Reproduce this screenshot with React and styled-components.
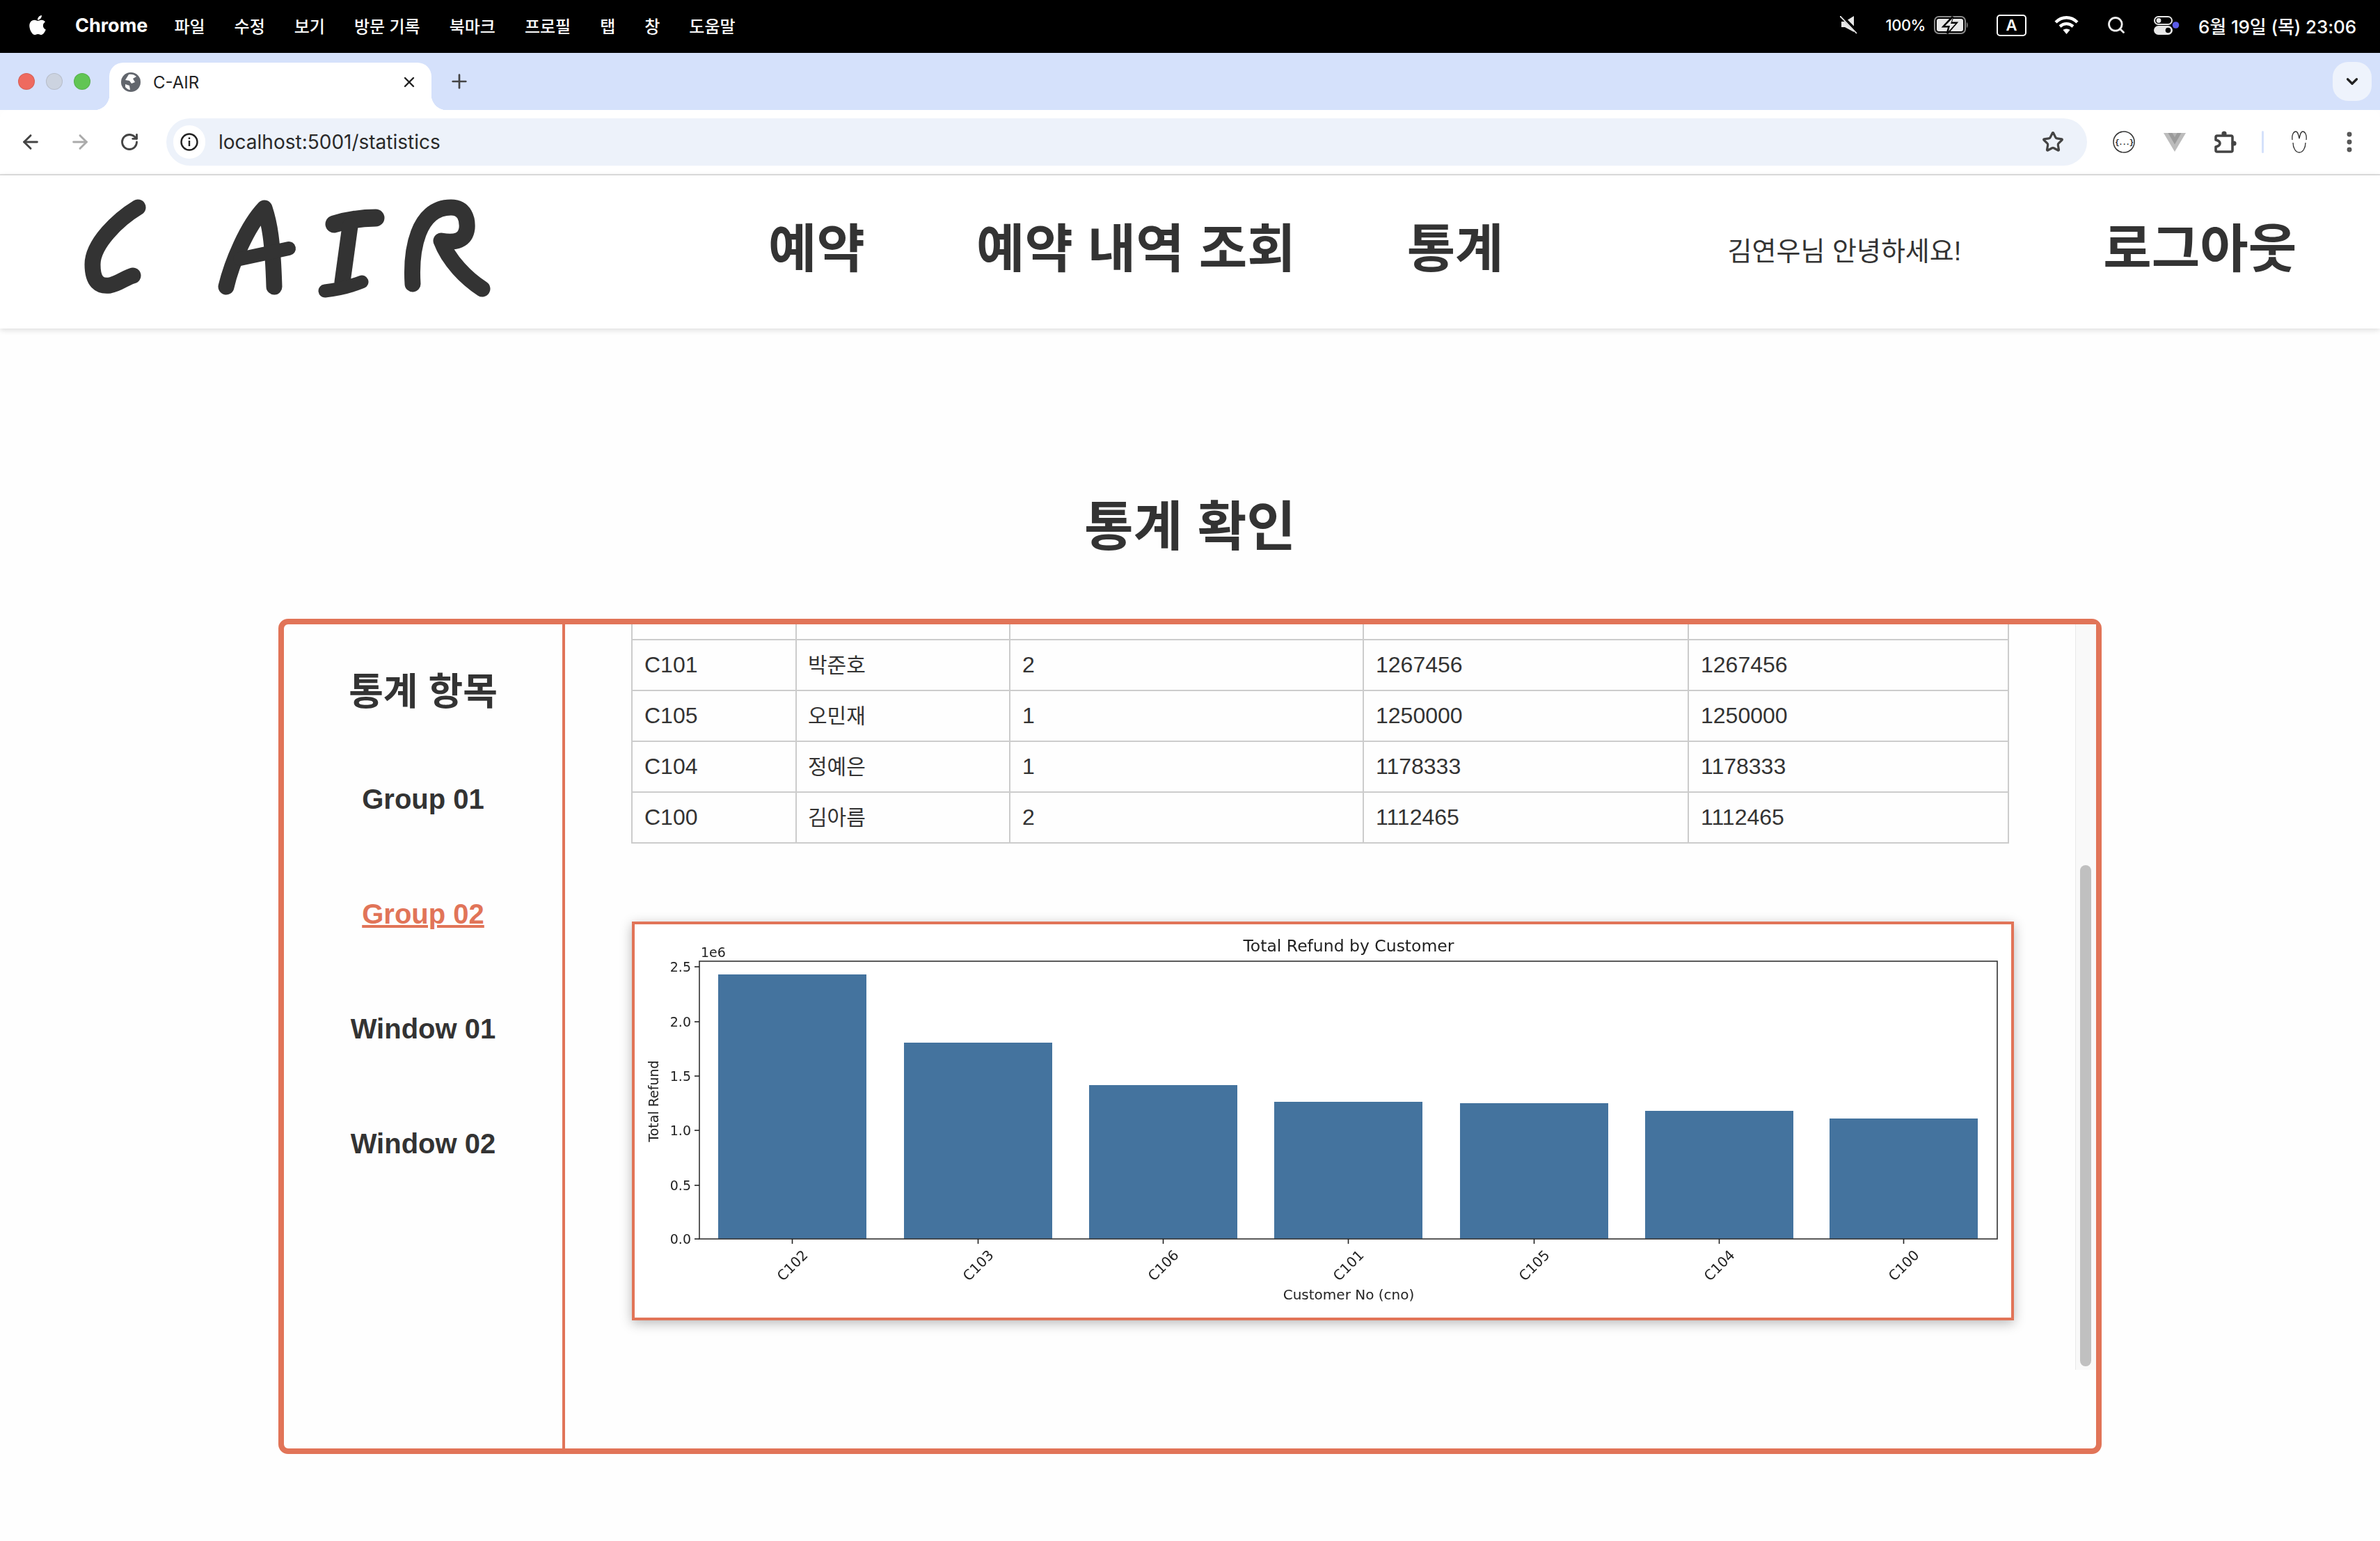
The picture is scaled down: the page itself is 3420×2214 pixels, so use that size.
import React, { useLayoutEffect, useRef } from "react"
import styled, { createGlobalStyle } from "styled-components"
import { ArrowLeft, ArrowRight, ChevronDown, EllipsisVertical, Plus, RotateCw, Search, Star, X } from "lucide-react"
import { FaApple } from "react-icons/fa"

const SANS = `"Liberation Sans", "Noto Sans CJK KR", sans-serif`
const UI = `Inter, "Noto Sans CJK KR", sans-serif`
const ACCENT = "#e17458"
const TEXT = "#333"

const GlobalStyle = createGlobalStyle`
  html, body {
    margin: 0;
    background: #fefefe;
  }
  * {
    box-sizing: border-box;
  }
`

const Screen = styled.div`
  width: 3420px;
  height: 2214px;
  overflow: hidden;
  font-family: ${SANS};
  color: ${TEXT};
`

/* mac menu bar */
const MenuBar = styled.div`
  height: 76px;
  background: #000;
  color: #fff;
  display: flex;
  align-items: center;
  padding: 0 34px 4px 38px;
  font-family: ${UI};
  font-size: 24px;
  font-weight: 500;
`

const AppName = styled.span`
  font-weight: 700;
  font-size: 27px;
  margin: 0 38px 0 38px;
`

const MenuItems = styled.div`
  display: flex;
  gap: 42px;
`

const MenuStatus = styled.div`
  margin-left: auto;
  display: flex;
  align-items: center;
  gap: 40px;
`

const BatteryGroup = styled.div`
  display: flex;
  align-items: center;
  gap: 12px;
  font-size: 22px;
  letter-spacing: -0.5px;
`

const InputBadge = styled.span`
  width: 43px;
  height: 31px;
  border: 2px solid #fff;
  border-radius: 5px;
  display: flex;
  align-items: center;
  justify-content: center;
  font-size: 22px;
  font-weight: 600;
`

const Clock = styled.span`
  margin-left: -13px;
  font-size: 26px;
  letter-spacing: -0.1px;
`

/* browser tabs */
const TabStrip = styled.div`
  height: 82px;
  background: #d5e1fb;
  display: flex;
  align-items: center;
  padding: 0 12px 0 26px;
`

const Lights = styled.div`
  display: flex;
  gap: 16px;
  margin-right: 27px;
`

const Light = styled.span`
  width: 24px;
  height: 24px;
  border-radius: 50%;
  background: ${props => props.$color};
  border: 1px solid rgba(0, 0, 0, 0.1);
`

const Tab = styled.div`
  position: relative;
  align-self: flex-end;
  width: 463px;
  height: 68px;
  background: #fff;
  border-radius: 20px 20px 0 0;
  display: flex;
  align-items: center;
  gap: 18px;
  padding: 0 20px 12px 17px;
  font-family: ${UI};
  font-size: 24px;
  color: #222;

  &::before,
  &::after {
    content: "";
    position: absolute;
    bottom: 0;
    width: 22px;
    height: 22px;
  }
  &::before {
    left: -22px;
    background: radial-gradient(circle at 0 0, transparent 22px, #fff 22.5px);
  }
  &::after {
    right: -22px;
    background: radial-gradient(circle at 100% 0, transparent 22px, #fff 22.5px);
  }
`

const TabClose = styled(X)`
  margin-left: auto;
`

const NewTab = styled(Plus)`
  margin-left: 24px;
  color: #444;
`

const TabMenu = styled.div`
  margin-left: auto;
  width: 56px;
  height: 56px;
  border-radius: 22px;
  background: #eef3fc;
  display: flex;
  align-items: center;
  justify-content: center;
  color: #222;
`

/* browser toolbar */
const Toolbar = styled.div`
  height: 94px;
  background: #fff;
  border-bottom: 2px solid #e0e0e0;
  border-radius: 14px 14px 0 0;
  display: flex;
  align-items: center;
  padding: 0 22px 0 8px;
`

const ToolButton = styled.span`
  width: ${props => props.$w || 71}px;
  height: 48px;
  flex: none;
  display: flex;
  align-items: center;
  justify-content: center;
  color: ${props => props.$color || "#444"};
`

const AddressBar = styled.div`
  flex: 1;
  height: 68px;
  margin: 0 17px 0 18px;
  padding: 0 33px 0 10px;
  border-radius: 34px;
  background: #edf2fa;
  display: flex;
  align-items: center;
`

const SiteInfo = styled.span`
  width: 46px;
  height: 48px;
  border-radius: 24px;
  background: #fff;
  display: flex;
  align-items: center;
  justify-content: center;
`

const Url = styled.span`
  margin-left: 19px;
  font-family: ${UI};
  font-size: 28px;
  color: #2a2a2a;
`

const StarIcon = styled(Star)`
  margin-left: auto;
  color: #444;
`

const ToolDivider = styled.span`
  width: 3px;
  height: 32px;
  margin-left: 15px;
  background: #d5e1fb;
  border-radius: 2px;
`

/* site header */
const SiteHeader = styled.header`
  position: relative;
  height: 220px;
  background: #fff;
  box-shadow: 0 2px 8px rgba(0, 0, 0, 0.14);
  display: flex;
  align-items: center;
  padding: 0 0 8px 118px;
`

const Logo = styled.svg`
  width: 590px;
  height: 145px;
  flex: none;
  margin-bottom: 6px;
`

const Nav = styled.nav`
  display: flex;
  gap: 160px;
  margin-left: 396px;
`

const NavLink = styled.a`
  font-size: 75.5px;
  font-weight: 700;
  line-height: 1.2;
  color: ${TEXT};
  white-space: nowrap;
`

const Greeting = styled.span`
  margin: 0 0 2px 322px;
  font-size: 38px;
  white-space: nowrap;
`

const Logout = styled(NavLink)`
  margin-left: 204px;
`

/* page */
const PageTitle = styled.h1`
  margin: 239px 0 86px;
  height: 92px;
  line-height: 92px;
  text-align: center;
  font-size: 76.8px;
  font-weight: 700;
`

const StatsBox = styled.section`
  width: 2620px;
  height: 1200px;
  margin: 0 auto;
  border: 8px solid ${ACCENT};
  border-radius: 14px;
  display: flex;
  align-items: flex-start;
`

const Sidebar = styled.aside`
  width: 404px;
  height: 100%;
  flex: none;
  border-right: 4px solid ${ACCENT};
  padding-top: 64px;
  display: flex;
  flex-direction: column;
  align-items: center;
`

const SidebarTitle = styled.h2`
  margin: 0 0 39px;
  height: 66px;
  line-height: 66px;
  font-size: 54px;
  font-weight: 700;
`

const SideItem = styled.a`
  height: 165px;
  display: flex;
  align-items: center;
  font-size: 40px;
  font-weight: 700;
  color: ${props => (props.$active ? ACCENT : TEXT)};
  text-decoration: ${props => (props.$active ? "underline" : "none")};
`

const PanelWrap = styled.div`
  position: relative;
  flex: 1;
  height: 1071px;
`

const Panel = styled.div`
  height: 100%;
  overflow: hidden;
`

const PanelContent = styled.div`
  height: 1537px;
  padding: 407px 0 0 95px;
`

const ScrollTrack = styled.div`
  position: absolute;
  top: 0;
  right: 0;
  width: 30px;
  height: 100%;
  background: #f9f9f9;
  border-left: 1px solid #e9e9e9;
  padding: 346px 0 0 6px;
`

const ScrollThumb = styled.div`
  width: 16px;
  height: 720px;
  border-radius: 8px;
  background: #c0c0c0;
`

const Table = styled.table`
  width: 1978px;
  table-layout: fixed;
  border-collapse: collapse;
`

const Cell = styled.td`
  height: 73px;
  padding: ${props => (props.$ko ? "0 16px 5px" : "0 17px")};
  border: 2px solid #ccc;
  font-size: ${props => (props.$ko ? "30px" : "32px")};
`

const ChartFrame = styled.figure`
  width: 1986px;
  height: 573px;
  margin: 112px 0 0 1px;
  background: #fff;
  border: 4px solid ${ACCENT};
  box-shadow: 0 4px 16px rgba(0, 0, 0, 0.28);
`

const ChartSvg = styled.svg`
  display: block;
  width: 1978px;
  height: 565px;
  filter: blur(0.5px);
  font-family: "DejaVu Sans", sans-serif;
  fill: #222;
`

const COLUMNS = [236, 307, 508, 467, 460]

// the rows above C101 are scrolled out of the panel, one empty row shows their bottom edge
const ROWS = [
  ["", "", "", "", ""],
  ["C101", "박준호", "2", "1267456", "1267456"],
  ["C105", "오민재", "1", "1250000", "1250000"],
  ["C104", "정예은", "1", "1178333", "1178333"],
  ["C100", "김아름", "2", "1112465", "1112465"],
]

// bar tops are read off the plot, in page pixels
const BARS = [
  { label: "C102", x: 1032, top: 1400 },
  { label: "C103", x: 1299, top: 1498 },
  { label: "C106", x: 1565, top: 1559 },
  { label: "C101", x: 1831, top: 1583 },
  { label: "C105", x: 2098, top: 1585 },
  { label: "C104", x: 2364, top: 1596 },
  { label: "C100", x: 2629, top: 1607 },
]

const Y_TICKS = [
  ["0.0", 1780],
  ["0.5", 1703],
  ["1.0", 1624],
  ["1.5", 1546],
  ["2.0", 1468],
  ["2.5", 1389],
]

const RefundChart = () => (
  <ChartSvg viewBox="912 1328 1978 565">
    <text x="1938" y="1367" fontSize="23.5" textAnchor="middle">Total Refund by Customer</text>
    <text x="1007" y="1375" fontSize="19">1e6</text>
    {BARS.map(bar => (
      <rect key={bar.label} x={bar.x} y={bar.top} width="213" height={1780 - bar.top} fill="#44739e" />
    ))}
    <rect x="1005" y="1381" width="1865" height="399" fill="none" stroke="#333" strokeWidth="1.6" />
    {Y_TICKS.map(([label, y]) => (
      <g key={label}>
        <line x1="998" x2="1005" y1={y} y2={y} stroke="#222" strokeWidth="1.6" />
        <text x="993" y={y + 7} fontSize="19" textAnchor="end">{label}</text>
      </g>
    ))}
    {BARS.map(bar => {
      const center = bar.x + 106.5
      return (
        <g key={bar.label}>
          <line x1={center} x2={center} y1="1780" y2="1787" stroke="#222" strokeWidth="1.6" />
          <text
            x={center}
            y="1825"
            fontSize="20"
            textAnchor="middle"
            transform={`rotate(-45 ${center} 1818)`}
          >
            {bar.label}
          </text>
        </g>
      )
    })}
    <text x="1938" y="1867" fontSize="20" textAnchor="middle">Customer No (cno)</text>
    <text x="946" y="1582" fontSize="19" textAnchor="middle" transform="rotate(-90 946 1582)">Total Refund</text>
  </ChartSvg>
)

const CairLogo = () => (
  <Logo viewBox="118 283 590 145" role="img" aria-label="C AIR">
    <g fill="none" stroke="#333" strokeLinecap="round" strokeLinejoin="round" strokeWidth="23">
      <path d="M198 298C170 315 133 350 133 380C133 405 143 412 158 410C170 408 182 398 191 396" />
      <path d="M325 412C333 378 355 325 380 299C387 320 392 345 394 412" />
      <path d="M345 372L415 357" strokeWidth="20" />
      <path d="M480 322C500 316 520 313 540 313" strokeWidth="25" />
      <path d="M503 325L492 405" />
      <path d="M467 418C485 416 505 411 520 405" strokeWidth="19" />
      <path d="M593 408C590 360 600 298 648 298C668 298 672 315 671 328C669 345 655 350 634 346C645 375 670 400 693 415" />
    </g>
  </Logo>
)

const GlobeIcon = () => (
  <svg width="28" height="28" viewBox="0 0 28 28">
    <circle cx="14" cy="14" r="14" fill="#62666d" />
    <path d="M11 3c4-1 8 0 11 3l-5 3 3 5-5 2-3-4-6-1zM6 17l6 2 1 6c-3 0-5-2-7-4z" fill="#fff" />
  </svg>
)

const MuteIcon = () => (
  <svg width="26" height="26" viewBox="0 0 26 26" fill="#e8e8e8">
    <path d="M2 8h5L20 0v23L7 16H2z" />
    <path d="M2 0l24 24" stroke="#000" strokeWidth="5" />
    <path d="M0 0l24 25" stroke="#e8e8e8" strokeWidth="1.8" />
  </svg>
)

const BatteryIcon = () => (
  <svg width="50" height="26" viewBox="0 0 50 26">
    <rect x="1" y="1" width="44" height="24" rx="6" fill="none" stroke="#8a8a8a" strokeWidth="2" />
    <rect x="4" y="4" width="38" height="18" rx="3" fill="#e8e8e8" />
    <path d="M47 9c2 1 2 7 0 8z" fill="#8a8a8a" />
    <path d="M27 1L14 15h8l-3 10 13-15h-8z" fill="#000" stroke="#000" strokeWidth="3" />
    <path d="M27 3L16 14h7l-2 8 10-11h-7z" fill="#e8e8e8" />
  </svg>
)

const WifiIcon = () => (
  <svg width="35" height="28" viewBox="0 0 35 28" fill="none" stroke="#fff" strokeWidth="4.4">
    <path d="M2 10c9-9 22-9 31 0" />
    <path d="M8 16c6-5 13-5 19 0" />
    <path d="M17.5 27l-5-6c3-2 7-2 10 0z" fill="#fff" stroke="none" />
  </svg>
)

const ControlIcon = () => (
  <svg width="37" height="27" viewBox="0 0 37 27">
    <rect x="1" y="1" width="25" height="11" rx="5.5" fill="none" stroke="#e8e8e8" strokeWidth="2" />
    <circle cx="7" cy="6.5" r="3.4" fill="#e8e8e8" />
    <rect x="0" y="14" width="27" height="13" rx="6.5" fill="#e8e8e8" />
    <circle cx="20.5" cy="20.5" r="3.8" fill="#000" />
    <circle cx="31.5" cy="13" r="4.8" fill="#5b5be8" />
  </svg>
)

const InfoIcon = () => (
  <svg width="26" height="26" viewBox="0 0 26 26" fill="none" stroke="#222" strokeWidth="2.4">
    <circle cx="13" cy="13" r="11.5" />
    <path d="M13 11v8" />
    <path d="M13 6.4v2.6" />
  </svg>
)

const JsonIcon = () => (
  <svg width="32" height="32" viewBox="0 0 32 32" fill="none" stroke="#333">
    <circle cx="16" cy="16" r="15" strokeWidth="1.5" />
    <text x="16" y="19.5" fontSize="10.5" fontWeight="700" textAnchor="middle" fill="#222" stroke="none" fontFamily="Liberation Mono" letterSpacing="-1.2">
      {"{...}"}
    </text>
  </svg>
)

const VueIcon = () => (
  <svg width="32" height="27" viewBox="0 0 32 27">
    <path d="M0 0h32L16 27z" fill="#bcbcbc" />
    <path d="M6.5 0h19L16 16.5z" fill="#9b9b9b" />
    <path d="M12.5 0h7L16 6z" fill="#b4b4b4" />
  </svg>
)

const PuzzleIcon = () => (
  <svg width="32" height="32" viewBox="0 0 32 32">
    <path
      d="M4 7H24a2 2 0 0 1 2 2V28a2 2 0 0 1-2 2H4a2 2 0 0 1-2-2V23c4-1 6-3 6-5s-2-4-6-5V9a2 2 0 0 1 2-2z"
      fill="#fff"
      stroke="#444"
      strokeWidth="3.6"
      strokeLinejoin="round"
    />
    <circle cx="14" cy="4" r="3.6" fill="#444" />
    <circle cx="28" cy="18" r="3.6" fill="#444" />
  </svg>
)

const ProfileIcon = () => (
  <svg width="22" height="32" viewBox="0 0 22 32" fill="none" stroke="#333" strokeWidth="1.3">
    <path d="M1 13C0 5 3 1 6 1c3 0 4 5 5 10 1-5 2-10 5-10 3 0 6 4 5 12" />
    <path d="M2 17c0 8 4 14 9 14s9-6 9-14" />
  </svg>
)

const App = () => {
  const panelRef = useRef(null)

  useLayoutEffect(() => {
    panelRef.current.scrollTop = 459
  }, [])

  return (
    <Screen>
      <GlobalStyle />

      <MenuBar>
        <FaApple size={32} />
        <AppName>Chrome</AppName>
        <MenuItems>
          {["파일", "수정", "보기", "방문 기록", "북마크", "프로필", "탭", "창", "도움말"].map(item => (
            <span key={item}>{item}</span>
          ))}
        </MenuItems>
        <MenuStatus>
          <MuteIcon />
          <BatteryGroup>
            100%
            <BatteryIcon />
          </BatteryGroup>
          <InputBadge>A</InputBadge>
          <WifiIcon />
          <Search size={28} strokeWidth={2.4} color="#eee" />
          <ControlIcon />
          <Clock>6월 19일 (목) 23:06</Clock>
        </MenuStatus>
      </MenuBar>

      <TabStrip>
        <Lights>
          <Light $color="#ee6a5f" />
          <Light $color="#ccd3e0" />
          <Light $color="#61c554" />
        </Lights>
        <Tab>
          <GlobeIcon />
          C-AIR
          <TabClose size={24} strokeWidth={2.4} />
        </Tab>
        <NewTab size={32} strokeWidth={2} />
        <TabMenu>
          <ChevronDown size={26} strokeWidth={3} />
        </TabMenu>
      </TabStrip>

      <Toolbar>
        <ToolButton><ArrowLeft size={32} strokeWidth={2.2} /></ToolButton>
        <ToolButton $color="#aaa"><ArrowRight size={32} strokeWidth={2.2} /></ToolButton>
        <ToolButton><RotateCw size={28} strokeWidth={2.4} /></ToolButton>
        <AddressBar>
          <SiteInfo><InfoIcon /></SiteInfo>
          <Url>localhost:5001/statistics</Url>
          <StarIcon size={32} strokeWidth={2.4} />
        </AddressBar>
        <ToolButton $w={72}><JsonIcon /></ToolButton>
        <ToolButton $w={73}><VueIcon /></ToolButton>
        <ToolButton $w={74}><PuzzleIcon /></ToolButton>
        <ToolDivider />
        <ToolButton $w={101}><ProfileIcon /></ToolButton>
        <ToolButton $w={44} $color="#555"><EllipsisVertical size={38} strokeWidth={2.4} /></ToolButton>
      </Toolbar>

      <SiteHeader>
        <CairLogo />
        <Nav>
          <NavLink>예약</NavLink>
          <NavLink>예약 내역 조회</NavLink>
          <NavLink>통계</NavLink>
        </Nav>
        <Greeting>김연우님 안녕하세요!</Greeting>
        <Logout>로그아웃</Logout>
      </SiteHeader>

      <main>
        <PageTitle>통계 확인</PageTitle>
        <StatsBox>
          <Sidebar>
            <SidebarTitle>통계 항목</SidebarTitle>
            <SideItem>Group 01</SideItem>
            <SideItem $active>Group 02</SideItem>
            <SideItem>Window 01</SideItem>
            <SideItem>Window 02</SideItem>
          </Sidebar>
          <PanelWrap>
            <Panel ref={panelRef}>
              <PanelContent>
                <Table>
                  <colgroup>
                    {COLUMNS.map((width, i) => (
                      <col key={i} width={width} />
                    ))}
                  </colgroup>
                  <tbody>
                    {ROWS.map((row, r) => (
                      <tr key={r}>
                        {row.map((value, i) => (
                          <Cell key={i} $ko={i === 1}>{value}</Cell>
                        ))}
                      </tr>
                    ))}
                  </tbody>
                </Table>
                <ChartFrame>
                  <RefundChart />
                </ChartFrame>
              </PanelContent>
            </Panel>
            <ScrollTrack>
              <ScrollThumb />
            </ScrollTrack>
          </PanelWrap>
        </StatsBox>
      </main>
    </Screen>
  )
}

export default App
